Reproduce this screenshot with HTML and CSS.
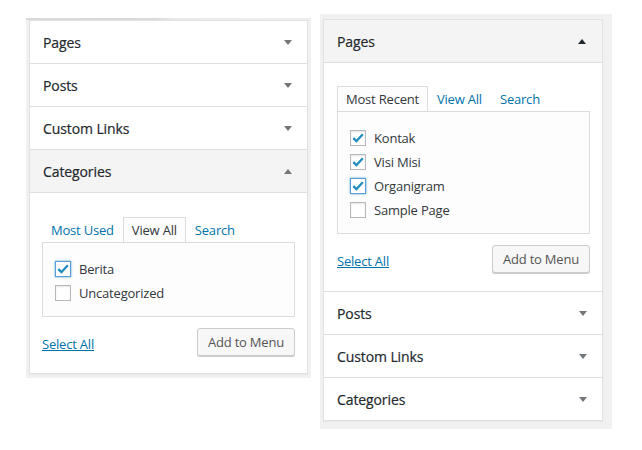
FILE: index.html
```html
<!DOCTYPE html>
<html>
<head>
<meta charset="utf-8">
<link rel="stylesheet" href="styles.css">
</head>
<body>
<div class="page">
  <div class="frame frame-left">
    <div class="panel">
      <div class="row"><span class="title">Pages</span><span class="arrow down"></span></div>
      <div class="row"><span class="title">Posts</span><span class="arrow down"></span></div>
      <div class="row"><span class="title">Custom Links</span><span class="arrow down"></span></div>
      <div class="row open"><span class="title">Categories</span><span class="arrow up"></span></div>
      <div class="content content-left">
        <div class="tabs">
          <span class="tab">Most Used</span>
          <span class="tab active">View All</span>
          <span class="tab">Search</span>
        </div>
        <div class="box">
          <label class="item"><span class="cb checked focus"><svg viewBox="0 0 16 16" width="16" height="16"><path d="M3.3 8.2 L6.4 11.2 L12.8 4.3" fill="none" stroke="#1e8cbe" stroke-width="2.3"/></svg></span>Berita</label>
          <label class="item"><span class="cb"></span>Uncategorized</label>
        </div>
        <div class="actions">
          <a class="select-all">Select All</a>
          <span class="button">Add to Menu</span>
        </div>
      </div>
    </div>
  </div>

  <div class="frame frame-right">
    <div class="panel">
      <div class="row open"><span class="title">Pages</span><span class="arrow up dark"></span></div>
      <div class="content content-right">
        <div class="tabs">
          <span class="tab active">Most Recent</span>
          <span class="tab">View All</span>
          <span class="tab">Search</span>
        </div>
        <div class="box">
          <label class="item"><span class="cb checked"><svg viewBox="0 0 16 16" width="16" height="16"><path d="M3.3 8.2 L6.4 11.2 L12.8 4.3" fill="none" stroke="#1e8cbe" stroke-width="2.3"/></svg></span>Kontak</label>
          <label class="item"><span class="cb checked"><svg viewBox="0 0 16 16" width="16" height="16"><path d="M3.3 8.2 L6.4 11.2 L12.8 4.3" fill="none" stroke="#1e8cbe" stroke-width="2.3"/></svg></span>Visi Misi</label>
          <label class="item"><span class="cb checked focus"><svg viewBox="0 0 16 16" width="16" height="16"><path d="M3.3 8.2 L6.4 11.2 L12.8 4.3" fill="none" stroke="#1e8cbe" stroke-width="2.3"/></svg></span>Organigram</label>
          <label class="item"><span class="cb"></span>Sample Page</label>
        </div>
        <div class="actions">
          <a class="select-all">Select All</a>
          <span class="button">Add to Menu</span>
        </div>
      </div>
      <div class="row"><span class="title">Posts</span><span class="arrow down"></span></div>
      <div class="row"><span class="title">Custom Links</span><span class="arrow down"></span></div>
      <div class="row last"><span class="title">Categories</span><span class="arrow down"></span></div>
    </div>
  </div>
</div>
</body>
</html>
```

FILE: styles.css
```css
html, body {
  margin: 0;
  padding: 0;
  background: #ffffff;
}

body {
  font-family: "Open Sans", "Noto Sans", sans-serif;
  color: #32373c;
}

.page {
  display: flex;
  align-items: flex-start;
}

.frame {
  background: #f1f1f1;
}

.frame-left {
  margin-left: 26px;
  margin-top: 18px;
  padding: 2px 3px 4px 3px;
  width: 279px;
  background: linear-gradient(to right, #d9d9d9 0, #dadada 45%, #eaeaea 52%, #eeeeee 100%) top left / 100% 2px no-repeat, #f1f1f1;
}

.frame-right {
  margin-left: 9px;
  margin-top: 14px;
  padding: 5px 9px 8px 3px;
  width: 280px;
}

.panel {
  background: #fff;
  border: 1px solid #e1e1e1;
  box-shadow: 0 1px 1px rgba(0, 0, 0, 0.04);
}

.row {
  height: 42px;
  display: flex;
  align-items: center;
  justify-content: space-between;
  padding: 0 15px 0 13px;
  border-bottom: 1px solid #dfdfdf;
  background: #fff;
}

.row.last {
  border-bottom: 0;
}

.row.open {
  background: #f4f4f4;
}

.title {
  font-size: 14px;
  font-weight: 400;
  color: #23282d;
  letter-spacing: -0.1px;
  -webkit-text-stroke: 0.2px #23282d;
}

.arrow {
  width: 0;
  height: 0;
  border-left: 4px solid transparent;
  border-right: 4px solid transparent;
}

.arrow.down {
  border-top: 5px solid #72777c;
}

.arrow.up {
  border-bottom: 5px solid #72777c;
}

.arrow.up.dark {
  border-bottom-color: #23282d;
  margin-right: 1px;
}

.content {
  border-bottom: 1px solid #dfdfdf;
}

.content-left {
  padding: 24px 12px 17px 12px;
  border-bottom: 0;
}

.content-right {
  padding: 23px 12px 18px 13px;
}

.tabs {
  display: flex;
  font-size: 13px;
  letter-spacing: -0.2px;
}

.tab {
  padding: 0 8px;
  height: 24px;
  line-height: 24px;
  border: 1px solid transparent;
  border-bottom: 0;
  color: #0073aa;
}

.tab.active {
  border-color: #dcdcdc;
  background: #fdfdfd;
  color: #32373c;
  position: relative;
  top: 1px;
  height: 24px;
  margin-top: -1px;
}

.box {
  border: 1px solid #dcdcdc;
  background: #fdfdfd;
  padding: 14px 12px 11px 12px;
  display: flex;
  flex-direction: column;
}

.item {
  display: flex;
  align-items: center;
  height: 24px;
  font-size: 13px;
  letter-spacing: -0.2px;
  color: #32373c;
}

.cb {
  box-sizing: border-box;
  width: 16px;
  height: 16px;
  border: 1px solid #b4b9be;
  background: #fff;
  box-shadow: inset 0 1px 2px rgba(0, 0, 0, 0.1);
  margin-right: 8px;
  display: flex;
  align-items: center;
  justify-content: center;
}

.cb svg {
  display: block;
  margin: -1px;
}

.cb.focus {
  border-color: #5b9dd9;
  box-shadow: 0 0 2px rgba(30, 140, 190, 0.8);
}

.actions {
  display: flex;
  justify-content: space-between;
  align-items: center;
  margin-top: 11px;
}

.select-all {
  font-size: 13px;
  letter-spacing: -0.2px;
  color: #0073aa;
  text-decoration: underline;
  margin-top: 4px;
}

.button {
  box-sizing: border-box;
  height: 28px;
  line-height: 26px;
  padding: 0 10px;
  font-size: 13px;
  letter-spacing: -0.2px;
  color: #555;
  background: #f7f7f7;
  border: 1px solid #cccccc;
  border-radius: 3px;
  box-shadow: 0 1px 0 #cccccc;
}
```
